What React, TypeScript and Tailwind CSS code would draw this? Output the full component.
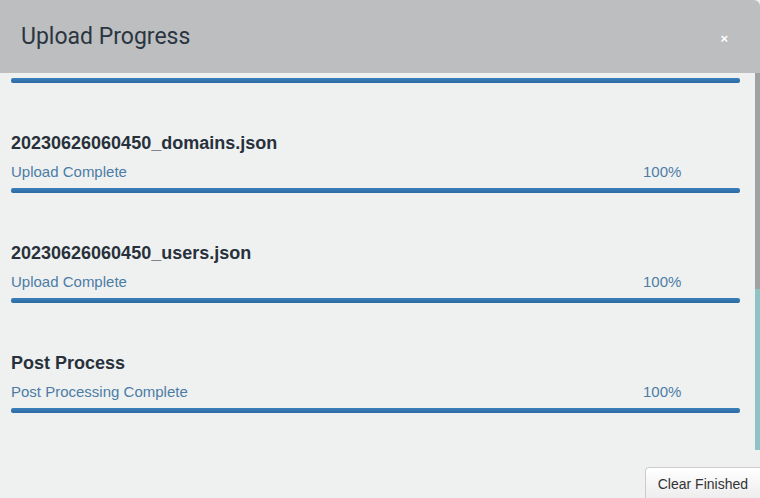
import React from "react";

const items = [
  { title: "20230626060450_domains.json", status: "Upload Complete", pct: "100%" },
  { title: "20230626060450_users.json", status: "Upload Complete", pct: "100%" },
  { title: "Post Process", status: "Post Processing Complete", pct: "100%" },
];

function Bar() {
  return <div className="h-[5px] w-full rounded-[2px] bg-gradient-to-b from-[#3b80bb] to-[#2c6aa2]" />;
}

export default function App() {
  return (
    <div className="w-[760px] h-[498px] overflow-hidden bg-[#eff1f1] flex flex-col" style={{ fontFamily: '"Liberation Sans", Arial, sans-serif' }}>
      <div className="h-[73px] shrink-0 bg-[#bdbec0] rounded-tr-[6px] flex items-center justify-between pl-[21px] pr-[32px]">
        <h1 className="text-[23px] text-[#2b3540] leading-none pb-[1px]" style={{ fontFamily: 'Roboto, sans-serif' }}>Upload Progress</h1>
        <span className="text-white text-[13px] font-bold leading-none mt-[4px]">×</span>
      </div>
      <div className="h-[377px] shrink-0 flex">
        <div className="flex-1 overflow-hidden pl-[11px] pr-[15px] pt-[5px]">
          <Bar />
          {items.map((it) => (
            <div key={it.title} className="mt-[49px]">
              <div className="text-[18px] leading-[22px] font-bold text-[#28313b]">{it.title}</div>
              <div className="mt-[8px] flex text-[15px] leading-[20px] text-[#4c7ca5]">
                <span className="flex-1">{it.status}</span>
                <span className="w-[97px]">{it.pct}</span>
              </div>
              <div className="mt-[6px]"><Bar /></div>
            </div>
          ))}
        </div>
        <div className="w-[5px] flex flex-col">
          <div className="h-[216px] bg-[#9fa1a3]" />
          <div className="flex-1 bg-[#8fc3c5]" />
        </div>
      </div>
      <div className="flex-1 flex justify-end items-end pt-[17px]">
        <button className="h-[34px] mr-[-11px] mb-[-3px] px-[12px] pr-[22px] text-[14px] text-[#333] border border-[#cccccc] rounded-[4px] bg-gradient-to-b from-white to-[#ececec] leading-[30px] self-start">
          Clear Finished
        </button>
      </div>
    </div>
  );
}
